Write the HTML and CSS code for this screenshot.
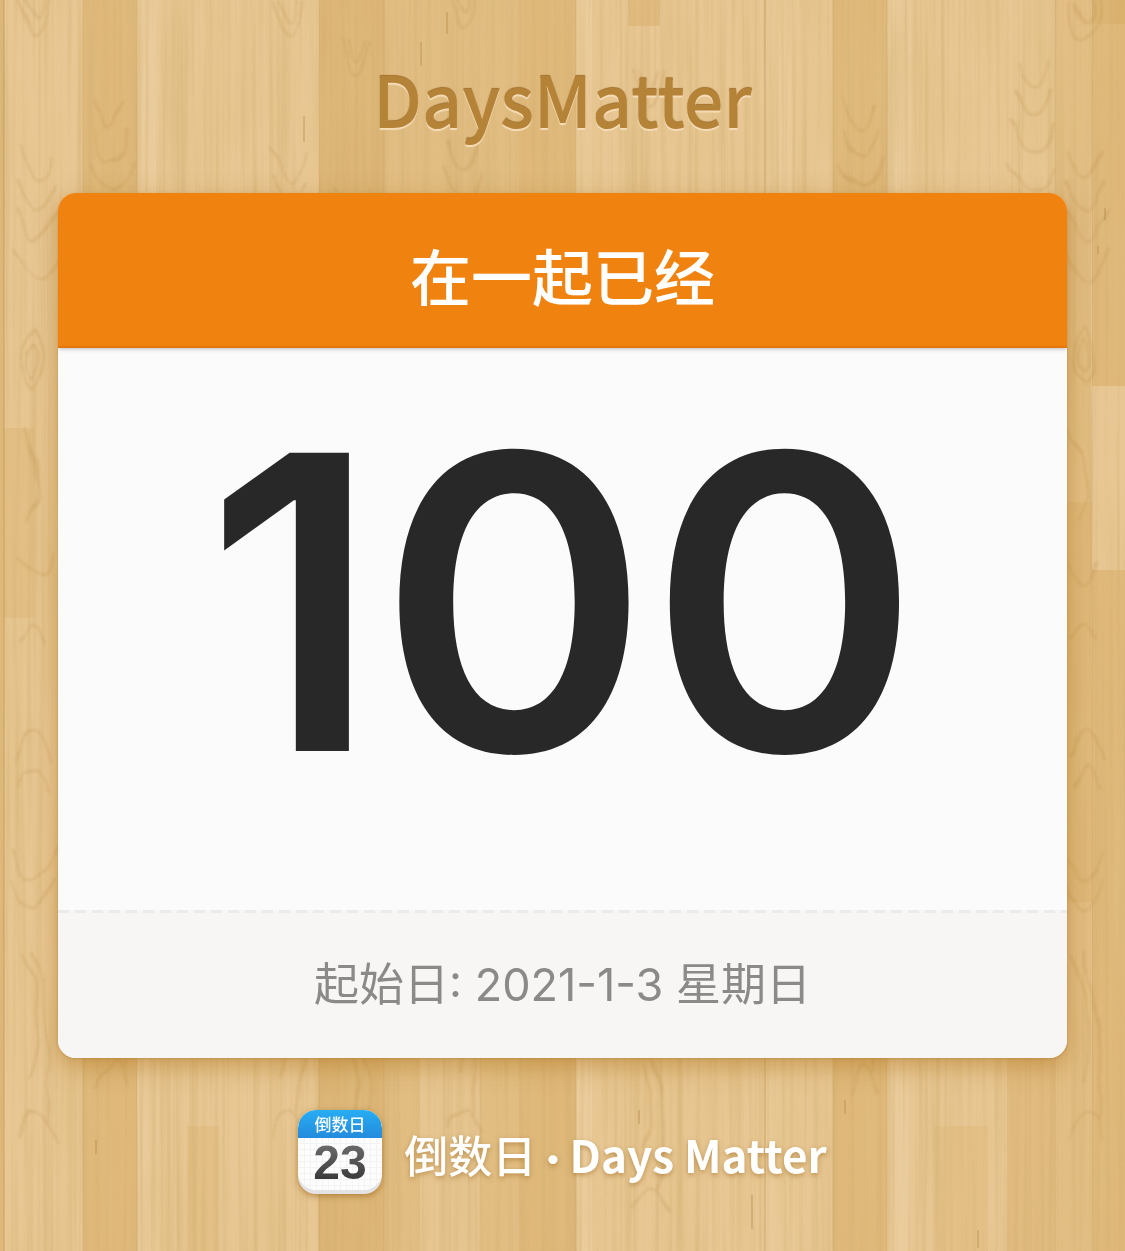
FILE: index.html
```html
<!DOCTYPE html>
<html lang="zh-CN">
<head>
<meta charset="utf-8">
<meta name="viewport" content="width=device-width, initial-scale=1">
<title>倒数日 · Days Matter</title>
<link rel="stylesheet" href="styles.css">
</head>
<body>
<svg class="wood" viewBox="0 0 1125 1251" preserveAspectRatio="xMidYMid slice" aria-hidden="true">
  <defs>
    <filter id="fine" x="0" y="0" width="100%" height="100%">
      <feTurbulence type="fractalNoise" baseFrequency="0.22 0.003" numOctaves="3" seed="8"/>
      <feColorMatrix values="0 0 0 0 0.62  0 0 0 0 0.42  0 0 0 0 0.16  1.6 0 0 0 -0.66"/>
    </filter>
    <filter id="broad" x="0" y="0" width="100%" height="100%">
      <feTurbulence type="fractalNoise" baseFrequency="0.035 0.006" numOctaves="3" seed="21"/>
      <feColorMatrix values="0 0 0 0 0.74  0 0 0 0 0.52  0 0 0 0 0.22  1.4 0 0 0 -0.58"/>
    </filter>
    <filter id="warp" x="-5%" y="-5%" width="110%" height="110%">
      <feTurbulence type="fractalNoise" baseFrequency="0.03 0.015" numOctaves="2" seed="4"/>
      <feDisplacementMap in="SourceGraphic" scale="22" xChannelSelector="R" yChannelSelector="G"/>
      <feGaussianBlur stdDeviation="1"/>
    </filter>
    <g id="knots" fill="none" stroke="#b98a45" stroke-width="2">
      <path d="M8 0q16 70 30 0M14 0q10 40 18 0M6 150q18 60 34 0M4 180q20 60 38 0M2 210q22 60 42 0M0 250q24 60 46 0"/>
      <path d="M22 330q-22 30 0 58q22-28 0-58M22 342q-12 18 0 34q12-16 0-34"/>
      <path d="M6 430q34 60 12 90M4 560q30 40 32 0M6 640q20-40 30 0"/>
      <path d="M4 760q18-60 38 0M8 790q14-50 30 0M4 850q18 60 38 0M2 880q20 60 40 0"/>
      <path d="M6 950q34 60 12 130M18 950q30 70 16 170M8 1140q18-50 34 0"/>
    </g>
  </defs>
  <rect width="1125" height="1251" fill="#e8c794"/>
  <g fill="#d9ae69">
    <rect width="4" height="1251" opacity=".6"/>
    <rect x="83" width="54" height="1251" opacity=".6"/>
    <rect x="319" width="65" height="1251" opacity=".7"/>
    <rect x="384" width="135" height="1251" opacity=".4"/>
    <rect x="519" width="57" height="1251" opacity=".6"/>
    <rect x="628" width="32" height="26" opacity=".5"/>
    <rect x="833" width="54" height="1251" opacity=".6"/>
    <rect x="1055" width="36" height="1251" opacity=".35"/>
    <rect x="1067" y="502" width="25" height="400" opacity=".4"/>
    <rect x="1092" width="33" height="386" opacity=".6"/>
    <rect x="1092" width="33" height="24" opacity=".7"/>
    <rect x="1092" y="570" width="33" height="681" opacity=".6"/>
    <rect x="4" y="428" width="30" height="190" opacity=".35"/>
    <rect x="187" y="1126" width="32" height="125" opacity=".3"/>
    <rect x="934" y="1126" width="54" height="125" opacity=".3"/>
    <rect x="1007" y="1040" width="48" height="211" opacity=".5"/>
  </g>
  <g fill="#eccfa1">
    <rect x="137" width="22" height="1251" opacity=".5"/>
    <rect x="576" width="16" height="1251" opacity=".6"/>
    <rect x="765" width="30" height="1251" opacity=".3"/>
    <rect x="887" width="24" height="1251" opacity=".5"/>
    <rect x="420" y="1050" width="60" height="201" opacity=".5"/>
  </g>
  <rect width="1125" height="1251" filter="url(#broad)" opacity=".8"/>
  <rect width="1125" height="1251" filter="url(#fine)" opacity=".6"/>
  <g filter="url(#warp)" opacity=".26">
    <use href="#knots" x="12"/>
    <use href="#knots" x="88" y="-50"/>
    <use href="#knots" x="265"/>
    <use href="#knots" x="330" y="40"/>
    <use href="#knots" x="440" y="-10"/>
    <use href="#knots" x="625" y="70"/>
    <use href="#knots" x="838" y="-50"/>
    <use href="#knots" x="1010" y="-90"/>
    <use href="#knots" x="1062"/>
  </g>
  <g stroke="#a77a36" stroke-width="1" opacity=".4">
    <path d="M4 0V1251M765 0V1251"/>
    <path d="M83 0V1251M137 0V1251M319 0V1251M384 0V1251M576 0V1251M833 0V1251M887 0V1251M1055 0V1251M1092 0V1251" opacity=".35"/>
    <path d="M447 12v22M421 42v24M304 116v26M639 1110v14M752 1195v34M978 1230v18M845 1100v14M96 1140v14M1105 208v12M1098 246v8" stroke-width="2" opacity=".7"/>
  </g>
</svg>

<main class="page">
  <h1 class="logo">DaysMatter</h1>

  <section class="card">
    <h2 class="card-title">在一起已经</h2>
    <p class="card-count">100</p>
    <p class="card-date">起始日: 2021-1-3 星期日</p>
  </section>

  <footer class="brand">
    <svg class="brand-icon" viewBox="0 0 84 84" role="img" aria-label="倒数日">
      <defs>
        <clipPath id="tile"><rect width="84" height="84" rx="18"/></clipPath>
        <clipPath id="sheet"><rect y="-20" width="84" height="100" rx="18"/></clipPath>
        <linearGradient id="blue" x1="0" y1="0" x2="0" y2="1"><stop offset="0" stop-color="#27adf3"/><stop offset="1" stop-color="#248bdd"/></linearGradient>
        <linearGradient id="ink" x1="0" y1="0" x2="0" y2="1"><stop offset="0" stop-color="#777"/><stop offset="1" stop-color="#2d2d2d"/></linearGradient>
      </defs>
      <g clip-path="url(#tile)">
        <rect width="84" height="84" fill="#e3e3e5"/>
        <g clip-path="url(#sheet)">
          <rect width="84" height="80" fill="#fdfdfd"/>
          <path d="M6.500 28v52M12.500 28v52M18.500 28v52M24.500 28v52M30.500 28v52M36.500 28v52M42.500 28v52M48.500 28v52M54.500 28v52M60.500 28v52M66.500 28v52M72.500 28v52M78.500 28v52M0 33.500h84M0 39.500h84M0 45.500h84M0 51.500h84M0 57.500h84M0 63.500h84M0 69.500h84M0 75.500h84" stroke="#f3f3f3"/>
        </g>
        <rect width="84" height="28" fill="url(#blue)"/>
      </g>
      <text class="icon-label" x="42" y="21" text-anchor="middle">倒数日</text>
      <text class="icon-number" x="42" y="69" text-anchor="middle" fill="url(#ink)">23</text>
    </svg>
    <p class="brand-name"><span class="brand-name-zh">倒数日</span><span class="brand-dot"> · </span>Days Matter</p>
  </footer>
</main>
</body>
</html>
```
FILE: styles.css
```css
* {
  box-sizing: border-box;
}

body {
  margin: 0;
  background: #e2bd84;
  font-family: Inter, "Noto Sans CJK SC", sans-serif;
}

h1,
h2,
p {
  margin: 0;
}

.wood {
  position: absolute;
  inset: 0;
  width: 100%;
  height: 100%;
  z-index: -1;
}

.page {
  display: flex;
  flex-direction: column;
  min-height: 100vh;
  padding: 48px 58px 52px;
}

.logo {
  margin-bottom: 45px;
  color: #b58338;
  font: 500 70px/100px "Noto Sans CJK SC", sans-serif;
  text-align: center;
  text-shadow: 0 2px 1px #f6ddb8, 0 -1px 1px #a1722e;
}

.card {
  overflow: hidden;
  border-radius: 18px;
  background: #fbfbfb;
  box-shadow: 0 8px 24px rgba(176, 116, 28, 0.5), 0 1px 3px rgba(150, 100, 30, 0.3);
  text-align: center;
}

.card-title {
  position: relative;
  padding: 36px 24px 28px;
  background: #f0820f;
  box-shadow: inset 0 -2px 1px #e4770a, 0 1px 4px rgba(0, 0, 0, 0.25);
  color: #fff;
  font: 500 61px/91px "Noto Sans CJK SC", sans-serif;
}

.card-count {
  padding: 13px 0 67px;
  color: #282828;
  font-size: 410px;
  font-weight: 600;
  line-height: 482px;
}

.card-date {
  padding: 44px 24px 42px;
  background:
    repeating-linear-gradient(90deg, #ebebeb 0 11px, transparent 11px 17px) 0 0 / 100% 3px no-repeat,
    #f7f6f5;
  color: #8b8a89;
  font-size: 45px;
  line-height: 62px;
}

.brand {
  display: flex;
  align-items: center;
  justify-content: center;
  gap: 22px;
  padding-top: 52px;
}

.brand-icon {
  width: 84px;
  height: 84px;
  border-radius: 18px;
  box-shadow: 0 2px 6px rgba(150, 95, 20, 0.6);
}

.icon-label {
  fill: #fff;
  font: 500 17px "Noto Sans CJK SC", sans-serif;
}

.icon-number {
  font: 700 48px "Liberation Sans", Arial, sans-serif;
}

.brand-name {
  padding-top: 6px;
  color: #fff;
  font: 700 44px/60px "Noto Sans CJK SC", sans-serif;
  text-shadow: 0 2px 5px rgba(150, 95, 20, 0.5);
}

.brand-name-zh {
  font-weight: 500;
}

.brand-dot {
  font-family: Lato, sans-serif;
  font-weight: 900;
}
```
